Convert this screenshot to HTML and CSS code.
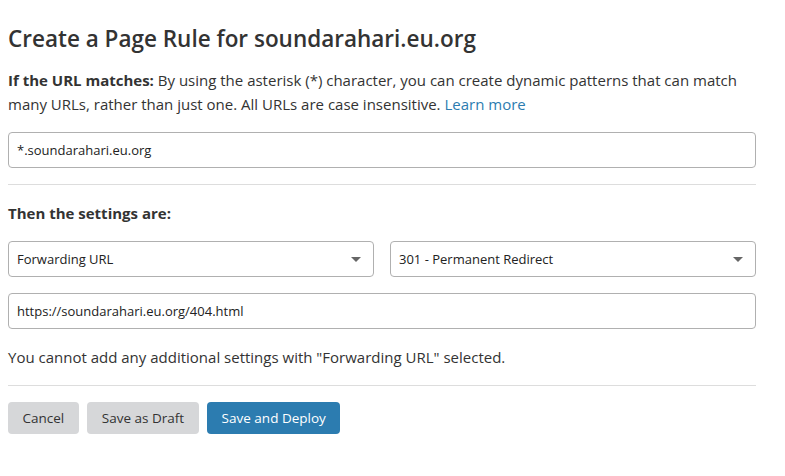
FILE: index.html
```html
<!DOCTYPE html>
<html lang="en">

<head>
    <meta charset="UTF-8">
    <meta name="viewport" content="width=device-width, initial-scale=1.0">
    <title>Create a Page Rule</title>
    <link rel="stylesheet" href="styles.css">
</head>

<body>
    <div class="page">
        <h1 class="title">Create a Page Rule for soundarahari.eu.org</h1>
        <p class="intro"><b>If the URL matches:</b> By using the asterisk (*) character, you can create dynamic patterns that can match
            many URLs, rather than just one. All URLs are case insensitive. <a href="#">Learn more</a></p>
        <div class="field">*.soundarahari.eu.org</div>
        <hr class="divider">
        <p class="label">Then the settings are:</p>
        <div class="row">
            <div class="field select">Forwarding URL<span class="caret"></span></div>
            <div class="field select">301 - Permanent Redirect<span class="caret"></span></div>
        </div>
        <div class="field">https://soundarahari.eu.org/404.html</div>
        <p class="note">You cannot add any additional settings with "Forwarding URL" selected.</p>
        <hr class="divider">
        <div class="actions">
            <button class="btn">Cancel</button>
            <button class="btn">Save as Draft</button>
            <button class="btn primary">Save and Deploy</button>
        </div>
    </div>
</body>

</html>
```
FILE: styles.css
```css
body {
    margin: 0;
    padding: 8px;
    font-family: "Open Sans", sans-serif;
    font-size: 15px;
    color: #333;
    background: #fff;
}

.page {
    width: 748px;
}

.title {
    font-size: 22.5px;
    font-weight: 600;
    margin: 15px 0 13px 0;
    line-height: 32px;
}

.intro {
    margin: 0 0 16px 0;
    line-height: 24px;
}

.intro a {
    color: #2c7cb0;
    text-decoration: none;
}

.field {
    height: 34px;
    border: 1px solid #b0b0b0;
    border-radius: 4px;
    padding: 0 8px;
    display: flex;
    align-items: center;
    font-size: 13px;
    color: #222;
}

.select {
    flex: 1;
    justify-content: space-between;
    padding-right: 12px;
}

.caret {
    width: 0;
    height: 0;
    border-left: 5px solid transparent;
    border-right: 5px solid transparent;
    border-top: 5px solid #666;
}

.divider {
    border: 0;
    border-top: 1px solid #ddd;
    margin: 16px 0;
}

.label {
    font-weight: 700;
    margin: 0 0 16px 0;
    line-height: 24px;
}

.row {
    display: flex;
    gap: 16px;
    margin-bottom: 16px;
}

.note {
    margin: 16px 0 0 0;
    line-height: 24px;
}

.actions {
    display: flex;
    gap: 8.5px;
}

.btn {
    font-family: "Open Sans", sans-serif;
    font-size: 13.5px;
    border: 0;
    border-radius: 4px;
    background: #d6d7d9;
    color: #333;
    height: 32px;
    padding: 0 14.5px;
}

.primary {
    background: #2c7cb0;
    color: #fff;
}
```
